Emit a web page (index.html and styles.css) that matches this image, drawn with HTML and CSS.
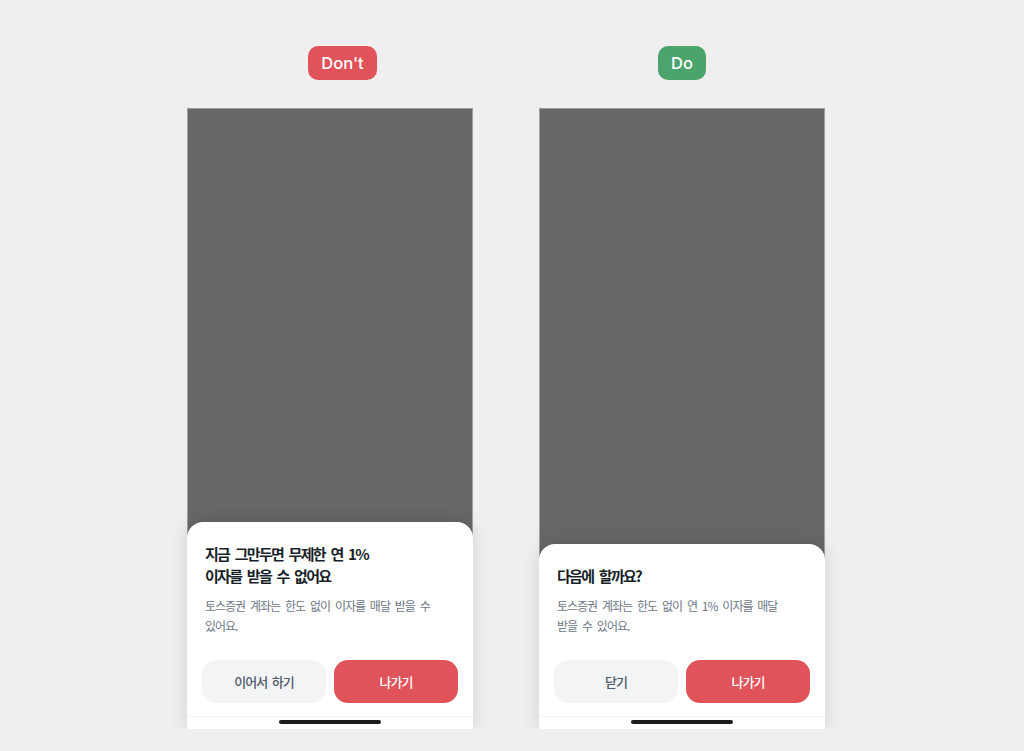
FILE: index.html
```html
<!DOCTYPE html>
<html lang="ko">
<head>
<meta charset="utf-8">
<title>Dialog Do / Don't</title>
<link rel="stylesheet" href="styles.css">
</head>
<body>
<main class="page">
  <section class="col">
    <div class="badge badge-dont">Don't</div>
    <div class="phone">
      <div class="sheet">
        <h2 class="sheet-title">지금 그만두면 무제한 연 1%<br>이자를 받을 수 없어요</h2>
        <p class="sheet-body">토스증권 계좌는 한도 없이 이자를 매달 받을 수<br>있어요.</p>
        <div class="actions">
          <button class="btn btn-secondary">이어서 하기</button>
          <button class="btn btn-primary">나가기</button>
        </div>
        <div class="home"><span class="home-bar"></span></div>
      </div>
    </div>
  </section>
  <section class="col">
    <div class="badge badge-do">Do</div>
    <div class="phone">
      <div class="sheet">
        <h2 class="sheet-title">다음에 할까요?</h2>
        <p class="sheet-body">토스증권 계좌는 한도 없이 연 1% 이자를 매달<br>받을 수 있어요.</p>
        <div class="actions">
          <button class="btn btn-secondary">닫기</button>
          <button class="btn btn-primary">나가기</button>
        </div>
        <div class="home"><span class="home-bar"></span></div>
      </div>
    </div>
  </section>
</main>
</body>
</html>
```
FILE: styles.css
```css
html, body {
  margin: 0;
  background: #efefef;
}

.page {
  display: flex;
  gap: 66px;
  padding: 46px 0 0 187px;
}

.col {
  display: flex;
  flex-direction: column;
  align-items: center;
  width: 286px;
}

.badge {
  height: 34px;
  line-height: 34px;
  padding: 0 13px;
  border-radius: 10px;
  color: #fff;
  font-family: Inter, "Noto Sans", sans-serif;
  font-weight: 500;
  font-size: 16.5px;
}

.badge-dont {
  background: #e0535a;
  margin-left: 25px;
}

.badge-do {
  background: #4aa46b;
}

.phone {
  margin-top: 28px;
  width: 286px;
  height: 621px;
  box-sizing: border-box;
  background: #676767;
  border: 1px solid #9f9f9f;
  border-bottom: 0;
  display: flex;
  flex-direction: column;
  justify-content: flex-end;
}

.sheet {
  margin: 0 -1px;
  background: #fff;
  border-radius: 16px 16px 0 0;
  box-shadow: 0 0 18px rgba(0, 0, 0, 0.13);
  padding-top: 21px;
  font-family: "Noto Sans CJK KR", sans-serif;
}

.sheet-title {
  margin: 0;
  padding: 0 18px;
  font-size: 15px;
  line-height: 22px;
  font-weight: 700;
  color: #191f28;
  letter-spacing: -1.7px;
  word-spacing: 3px;
}

.sheet-body {
  margin: 9.5px 0 0;
  padding: 0 18px;
  font-size: 12px;
  line-height: 20px;
  font-weight: 400;
  color: #6b7684;
  letter-spacing: -1px;
  word-spacing: 2.5px;
}

.actions {
  display: flex;
  gap: 8px;
  padding: 0 15px;
  margin-top: 24px;
}

.btn {
  flex: 1;
  height: 43px;
  border: 0;
  border-radius: 14px;
  font-family: "Noto Sans CJK KR", sans-serif;
  font-size: 13px;
  font-weight: 500;
  letter-spacing: -1px;
  word-spacing: 2px;
  padding: 0;
}

.btn-secondary {
  background: #f2f4f6;
  color: #4e5968;
}

.btn-primary {
  background: #e0535a;
  color: #fff;
}

.home {
  margin-top: 13px;
  height: 12px;
  border-top: 1px solid #f2f2f2;
  display: flex;
  justify-content: center;
}

.home-bar {
  width: 102px;
  height: 4px;
  border-radius: 2px;
  background: #1c1c1f;
  margin-top: 3px;
}
```
